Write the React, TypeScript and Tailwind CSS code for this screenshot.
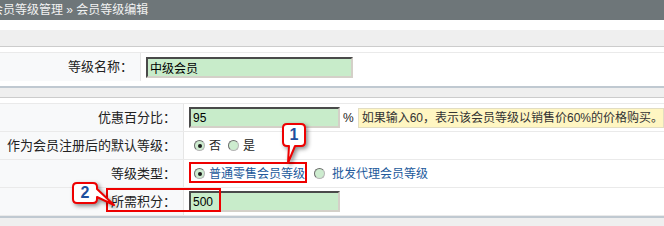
import React from 'react';

const Radio: React.FC<{ checked?: boolean }> = ({ checked }) => (
  <span className="relative inline-flex w-[11px] h-[11px] shrink-0 items-center justify-center rounded-full border border-t-[#6b6b6b] border-l-[#6b6b6b] border-b-[#b5b5b5] border-r-[#b5b5b5] bg-[#cdeccf]">
    {checked && <span className="w-[4px] h-[4px] rounded-full bg-[#1a1a1a]" />}
  </span>
);

const inputCls =
  'h-[21px] border-2 border-t-[#4a4a4a] border-l-[#4a4a4a] border-b-[#d4d0c8] border-r-[#d4d0c8] bg-[#c8ecca] px-[2px] text-[12px] leading-[17px] text-black outline-none';

const Row: React.FC<{ label: string; children: React.ReactNode }> = ({ label, children }) => (
  <div className="flex h-[28px] border-t border-[#eaeaea]">
    <div className="w-[184px] shrink-0 flex items-center justify-end pr-[7px] bg-[#f8f9fa] border-r border-[#e6e6e6] whitespace-nowrap text-[13px] text-[#222]">
      {label}
    </div>
    <div className="flex-1 flex items-center pl-[5px] text-[12px]">{children}</div>
  </div>
);

export default function App() {
  return (
    <div className="relative w-[664px] h-[226px] overflow-hidden bg-white font-['Liberation_Sans','Noto_Sans_CJK_SC',sans-serif]">
      {/* breadcrumb */}
      <div className="h-[20px] bg-[#6e7679] text-[12px] leading-[20px] text-[#f2f2f2] whitespace-nowrap">
        <span className="-ml-[9px]">会员等级管理 » 会员等级编辑</span>
      </div>

      <div className="h-[10px]" />

      {/* section 1 */}
      <div className="h-[17px] bg-[#efefef] border-b border-[#cccccc]" />
      <div className="pt-[5px] pb-[5px]">
        <div className="flex h-[29px] border-t border-[#eaeaea]">
          <div className="w-[141px] shrink-0 flex items-center justify-end pr-[7px] bg-[#f8f9fa] border-r border-[#e6e6e6] text-[13px] text-[#222]">
            等级名称：
          </div>
          <div className="flex-1 flex items-center pl-[5px]">
            <input className={`${inputCls} w-[207px]`} defaultValue="中级会员" />
          </div>
        </div>
      </div>

      {/* section 2 */}
      <div className="h-[12px] bg-[#efefef] border-t-2 border-[#c0c9d1] border-b border-b-[#cccccc]" />
      <div className="pt-[5px]">
        <Row label="优惠百分比：">
          <input className={`${inputCls} w-[151px]`} defaultValue="95" />
          <span className="ml-[3px] mr-[4px] text-[#222]">%</span>
          <div className="flex-1 h-[20px] flex items-center bg-[#fff6c2] border border-[#e2ddc2] pl-[3px] text-[#333] whitespace-nowrap">
            如果输入60，表示该会员等级以销售价60%的价格购买。
          </div>
        </Row>
        <Row label="作为会员注册后的默认等级：">
          <span className="ml-[5px] flex items-center gap-[4px] text-[#222]">
            <Radio checked />
            <span>否</span>
          </span>
          <span className="ml-[7px] flex items-center gap-[4px] text-[#222]">
            <Radio />
            <span>是</span>
          </span>
        </Row>
        <Row label="等级类型：">
          <span className="ml-[5px] flex items-center gap-[4px] text-[#22599b]">
            <Radio checked />
            <span>普通零售会员等级</span>
          </span>
          <span className="ml-[9px] flex items-center gap-[7px] text-[#22599b]">
            <Radio />
            <span>批发代理会员等级</span>
          </span>
        </Row>
        <Row label="所需积分：">
          <input className={`${inputCls} w-[151px]`} defaultValue="500" />
        </Row>
        <div className="border-t border-[#eaeaea] border-b-2 border-b-[#c0c9d1]" />
        <div className="h-[10px] bg-[#efefef]" />
      </div>

      {/* annotations */}
      <div className="absolute left-[189px] top-[162px] w-[118px] h-[21px] border-2 border-[#ee0000]" />
      <div className="absolute left-[106px] top-[188px] w-[115px] h-[24px] border-2 border-[#ee0000]" />

      <svg
        className="absolute left-[280px] top-[120px] drop-shadow-[2px_2px_2px_rgba(0,0,0,0.45)]"
        width="32"
        height="50"
        viewBox="280 120 32 50"
      >
        <path
          d="M287,124 H301 Q305,124 305,128 V142 Q305,146 301,146 H295 L288,163 L289,146 H287 Q283,146 283,142 V128 Q283,124 287,124 Z"
          fill="#fff"
          stroke="#ee0000"
          strokeWidth="2"
          strokeLinejoin="round"
        />
      </svg>
      <span className="absolute left-[283px] top-[124px] w-[22px] h-[22px] flex items-center justify-center text-[16px] font-bold text-[#1d4f9e]">
        1
      </span>

      <svg
        className="absolute left-[70px] top-[180px] drop-shadow-[2px_2px_2px_rgba(0,0,0,0.45)]"
        width="48"
        height="30"
        viewBox="70 180 48 30"
      >
        <path
          d="M77,183 H93 Q97,183 97,187 V189 L114,205 L97,197 V199 Q97,203 93,203 H77 Q73,203 73,199 V187 Q73,183 77,183 Z"
          fill="#fff"
          stroke="#ee0000"
          strokeWidth="2"
          strokeLinejoin="round"
        />
      </svg>
      <span className="absolute left-[73px] top-[183px] w-[24px] h-[20px] flex items-center justify-center text-[16px] font-bold text-[#1d4f9e]">
        2
      </span>
    </div>
  );
}
